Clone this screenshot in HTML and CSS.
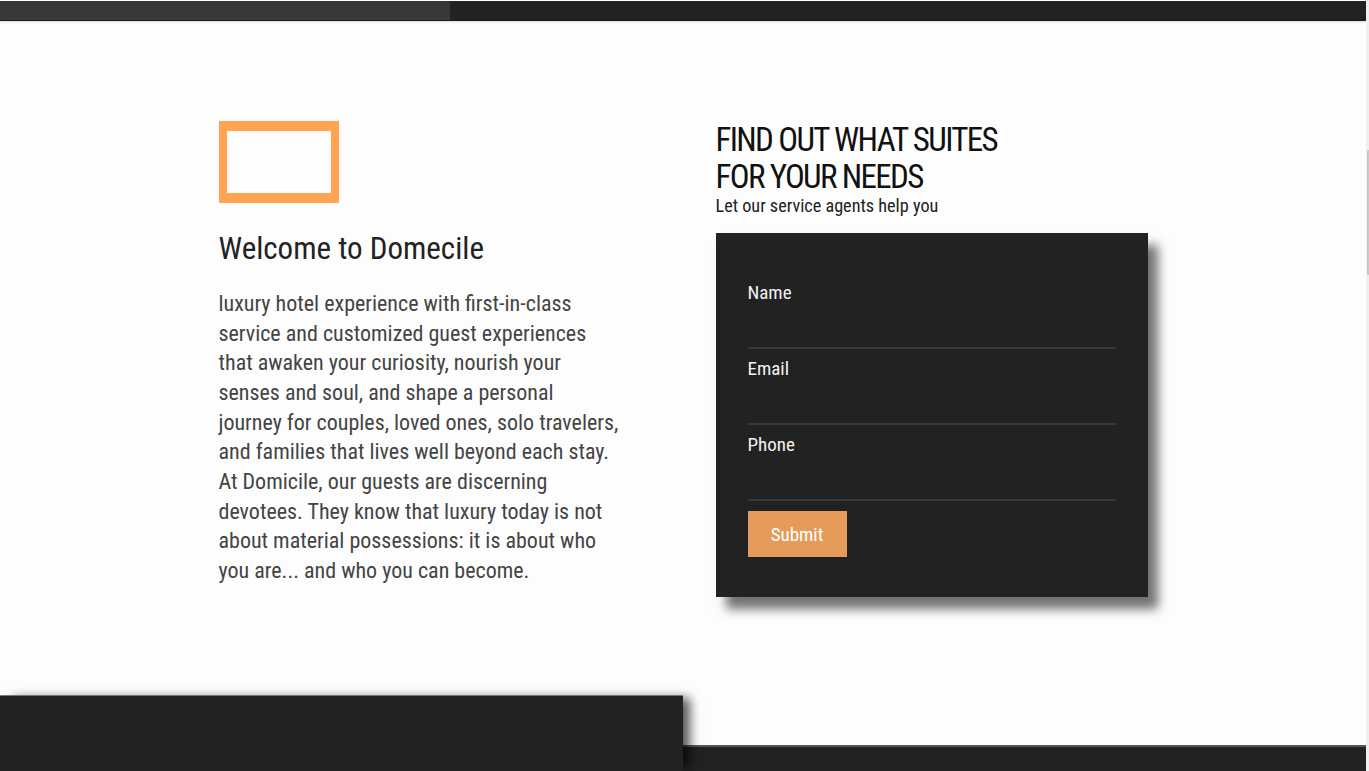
FILE: index.html
```html
<!DOCTYPE html>
<html lang="en">
<head>
<meta charset="utf-8">
<title>Domecile</title>
<link rel="stylesheet" href="styles.css">
</head>
<body>
<div class="page">
  <div class="main">
    <header class="topbar">
      <div class="topbar-left"></div>
      <div class="topbar-right"></div>
    </header>
    <section class="content">
      <div class="col-left">
        <div class="logo-box"></div>
        <h1 class="welcome">Welcome to Domecile</h1>
        <p class="intro">luxury hotel experience with first-in-class service and customized guest experiences that awaken your curiosity, nourish your senses and soul, and shape a personal journey for couples, loved ones, solo travelers, and families that lives well beyond each stay. At Domicile, our guests are discerning devotees. They know that luxury today is not about material possessions: it is about who you are... and who you can become.</p>
      </div>
      <div class="col-right">
        <h2 class="find">FIND OUT WHAT SUITES<br>FOR YOUR NEEDS</h2>
        <p class="sub">Let our service agents help you</p>
        <form class="form-card">
          <label class="field"><span class="field-label">Name</span></label>
          <label class="field"><span class="field-label">Email</span></label>
          <label class="field"><span class="field-label">Phone</span></label>
          <button type="button" class="submit">Submit</button>
        </form>
      </div>
    </section>
    <footer class="footer">
      <div class="footer-left"></div>
      <div class="footer-right"></div>
    </footer>
  </div>
  <div class="scrollbar"><div class="thumb"></div></div>
</div>
</body>
</html>
```
FILE: styles.css
```css
html, body {
  margin: 0;
  padding: 0;
  height: 100%;
  overflow: hidden;
  background: #fdfdfd;
}
body {
  font-family: Roboto, "Noto Sans", sans-serif;
  font-stretch: 80%;
}
.page {
  display: flex;
  height: 771px;
}
.main {
  flex: 1;
  display: flex;
  flex-direction: column;
  min-width: 0;
}
.scrollbar {
  width: 3px;
  background: #efefef;
  padding-top: 150px;
}
.thumb {
  height: 125px;
  background: #c9c9c9;
  margin-left: 1px;
  width: 2px;
}
.topbar {
  height: 21px;
  display: flex;
  box-shadow: 0 1px 2px rgba(0,0,0,0.15);
}
.topbar-left {
  width: 450px;
  background: linear-gradient(#363636, #3b3b3b);
  border-top: 1px solid #fff;
  border-bottom: 1px solid #1c1c1c;
  box-sizing: border-box;
}
.topbar-right {
  flex: 1;
  background: #222;
  border-top: 1px solid #fff;
  border-bottom: 1px solid #1a1a1a;
  box-sizing: border-box;
}
.content {
  flex: 1;
  display: flex;
  justify-content: center;
  gap: 32px;
  padding-top: 100px;
}
.col-left {
  width: 465px;
}
.col-right {
  width: 432px;
}
.logo-box {
  width: 104px;
  height: 62px;
  border-style: solid;
  border-color: #ffa552;
  border-width: 10px 8px;
}
.welcome {
  margin: 26px 0 0;
  font-weight: 400;
  font-size: 31px;
  line-height: 40px;
  color: #222;
}
.intro {
  margin: 20px 0 0;
  width: 400px;
  font-size: 22px;
  line-height: 29.67px;
  color: #444;
}
.find {
  margin: 0;
  font-weight: 400;
  font-size: 33px;
  letter-spacing: -1.65px;
  line-height: 37px;
  color: #111;
}
.sub {
  margin: 0;
  font-size: 18.2px;
  line-height: 22px;
  color: #222;
}
.form-card {
  margin-top: 16px;
  background: #222;
  padding: 40px 32px 40px;
  box-shadow: 10px 12px 10px rgba(0,0,0,0.55);
  display: flex;
  flex-direction: column;
}
.field {
  display: block;
  height: 76px;
  border-bottom: 2px solid #3a3a3a;
  padding-top: 8px;
  box-sizing: border-box;
}
.field-label {
  display: block;
  color: #f2f2f2;
  font-size: 19px;
  line-height: 24px;
}
.submit {
  margin-top: 10px;
  align-self: flex-start;
  width: 99px;
  height: 46px;
  border: none;
  background: #e59b5a;
  color: #fff;
  font-family: inherit;
  font-stretch: 80%;
  font-size: 19px;
  cursor: pointer;
}
.footer {
  display: flex;
  align-items: flex-end;
  height: 76px;
}
.footer-left {
  width: 683px;
  height: 76px;
  background: #222;
  border-top: 1px solid #777;
  box-sizing: border-box;
  box-shadow: 10px 0 10px -3px rgba(0,0,0,0.65);
  position: relative;
  z-index: 1;
}
.footer-right {
  flex: 1;
  height: 26px;
  background: #222;
  border-top: 2px solid #555;
  box-sizing: border-box;
}
```
